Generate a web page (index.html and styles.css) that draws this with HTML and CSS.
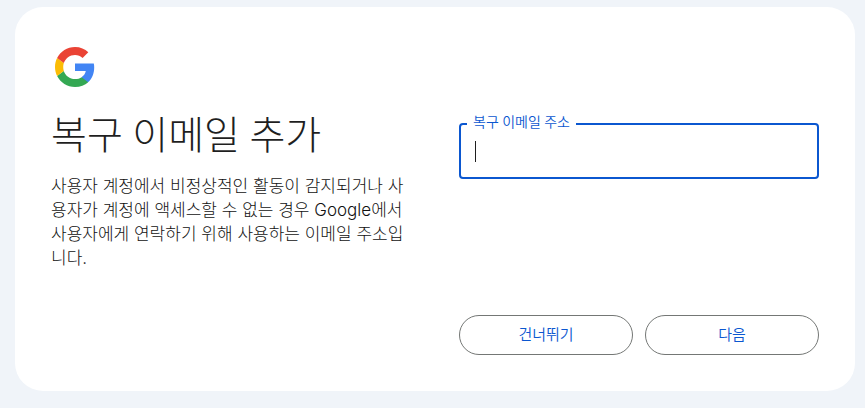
FILE: index.html
```html
<!DOCTYPE html>
<html lang="ko">
<head>
<meta charset="utf-8">
<meta name="viewport" content="width=device-width, initial-scale=1">
<title>복구 이메일 추가</title>
<link rel="stylesheet" href="styles.css">
</head>
<body>
<main class="card">
  <svg class="logo" viewBox="0 0 40 40" aria-hidden="true">
    <path fill="#4285f4" d="M39.2 20.5c0-1.5-.1-2.8-.4-4.100H20v7.700h10.800c-.5 2.500-1.900 4.600-4 6v5h6.500c3.800-3.500 5.900-8.600 5.900-14.600z"/>
    <path fill="#34a853" d="M20 40c5.400 0 9.900-1.800 13.200-4.800l-6.500-5c-1.800 1.200-4.100 1.900-6.700 1.900-5.200 0-9.600-3.500-11.200-8.200L2.100 29C5.400 35.500 12.200 40 20 40z"/>
    <path fill="#fbbc05" d="M8.800 23.900c-.4-1.200-.6-2.500-.6-3.900s.2-2.600.6-3.900L2.100 11C.8 13.700 0 16.700 0 20s.8 6.300 2.100 9z"/>
    <path fill="#ea4335" d="M20 7.900c2.900 0 5.600 1 7.600 3l5.700-5.700C29.900 2 25.400 0 20 0 12.200 0 5.400 4.500 2.100 11l6.700 5.100C10.400 11.400 14.800 7.900 20 7.900z"/>
  </svg>
  <section class="intro">
    <h1>복구 이메일 추가</h1>
    <p>사용자 계정에서 비정상적인 활동이 감지되거나 사용자가 계정에 액세스할 수 없는 경우 Google에서 사용자에게 연락하기 위해 사용하는 이메일 주소입니다.</p>
  </section>
  <form class="form">
    <div class="field">
      <label for="email">복구 이메일 주소</label>
      <input id="email" type="email" autofocus>
      <span class="caret"></span>
    </div>
    <div class="actions">
      <button type="button">건너뛰기</button>
      <button type="submit">다음</button>
    </div>
  </form>
</main>
</body>
</html>
```
FILE: styles.css
```css
* {
  box-sizing: border-box;
}

body {
  margin: 0;
  padding: 7px 10px 17px 15px;
  background: #f0f4f9;
  color: #1f1f1f;
  font-family: Roboto, "Noto Sans CJK KR", sans-serif;
  font-weight: 350;
}

.card {
  display: grid;
  grid-template-columns: 1fr 1fr;
  column-gap: 48px;
  padding: 40px 36px 36px;
  border-radius: 28px;
  background: #fff;
}

.logo {
  grid-column: 1 / -1;
  width: 40px;
  height: 40px;
  margin-left: 4px;
}

h1 {
  margin: 25px 0 0;
  font-size: 39px;
  font-weight: 300;
  line-height: 48px;
}

.intro p {
  margin: 14px 0 0;
  color: #111;
  font-family: Inter, "Noto Sans CJK KR", sans-serif;
  font-size: 17px;
  font-weight: 300;
  line-height: 24px;
  word-break: break-all;
}

.form {
  display: flex;
  flex-direction: column;
  justify-content: space-between;
  min-height: 268px;
  padding-top: 36px;
}

.field {
  position: relative;
}

.field label {
  position: absolute;
  top: -9px;
  left: 8px;
  padding: 0 6px;
  background: #fff;
  color: #0b57d0;
  font-size: 14px;
  line-height: 16px;
}

.field input {
  display: block;
  width: 100%;
  height: 56px;
  padding: 14px;
  border: 2px solid #0b57d0;
  border-radius: 4px;
  outline: 0;
  background: transparent;
  font: inherit;
  caret-color: transparent;
}

.caret {
  position: absolute;
  top: 18px;
  left: 16px;
  width: 1px;
  height: 21px;
  background: #1f1f1f;
}

.actions {
  display: grid;
  grid-template-columns: 1fr 1fr;
  gap: 12px;
}

.actions button {
  height: 40px;
  padding: 0 16px 3px;
  border: 1px solid #747775;
  border-radius: 20px;
  background: transparent;
  color: #0b57d0;
  font: inherit;
  font-size: 15px;
}
```
